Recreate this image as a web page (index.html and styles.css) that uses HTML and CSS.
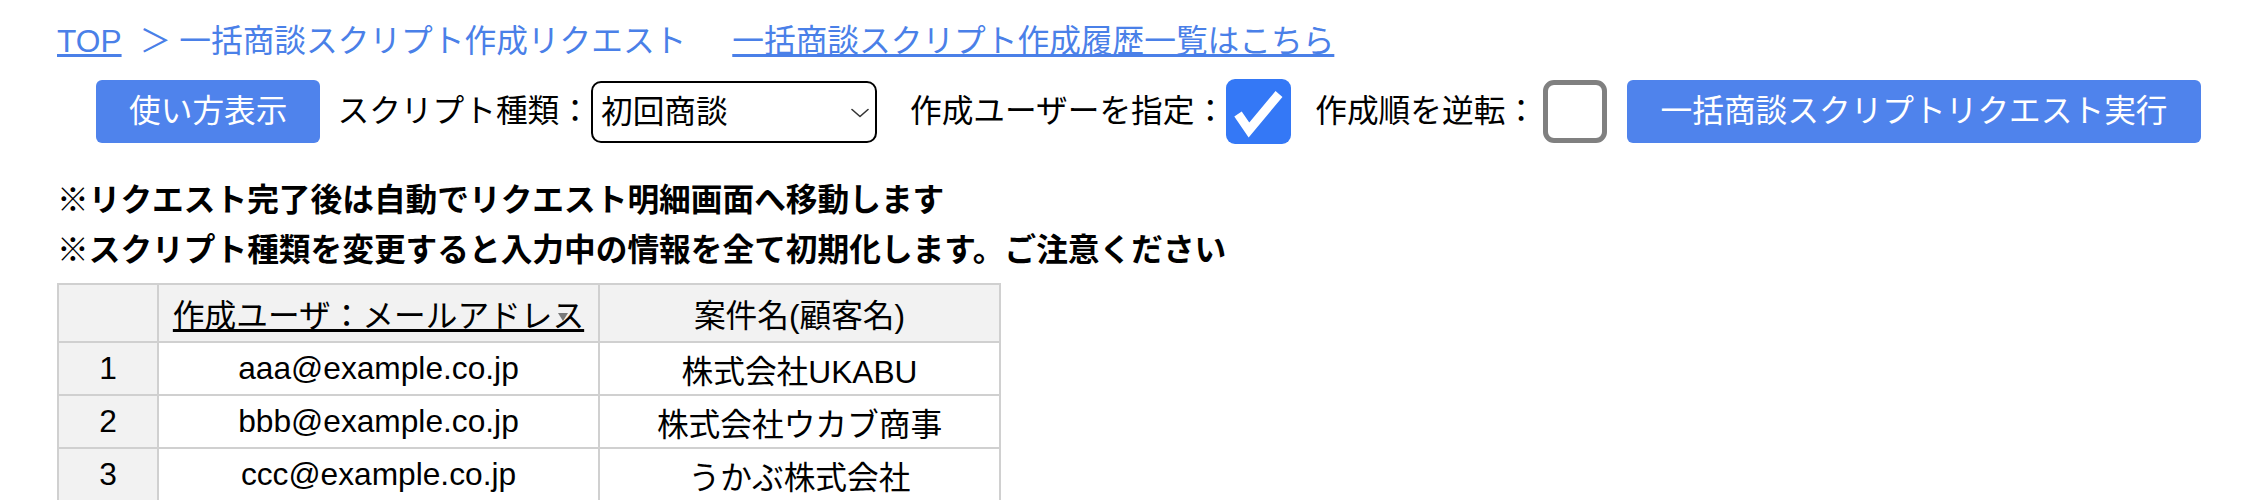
FILE: index.html
```html
<!DOCTYPE html>
<html lang="ja">
<head>
<meta charset="utf-8">
<title>一括商談スクリプト作成リクエスト</title>
<link rel="stylesheet" href="styles.css">
</head>
<body>
<div class="page">
  <nav class="breadcrumb">
    <a class="crumb-link" href="#">TOP</a><span class="crumb-sep">＞</span><span class="crumb-current">一括商談スクリプト作成リクエスト</span><a class="history-link" href="#">一括商談スクリプト作成履歴一覧はこちら</a>
  </nav>

  <div class="toolbar">
    <button class="btn btn-help" type="button">使い方表示</button>
    <span class="field-label label-type">スクリプト種類：</span>
    <div class="select-wrap">
      <select class="select">
        <option>初回商談</option>
      </select>
      <svg class="select-arrow" width="18" height="10" viewBox="0 0 18 10"><polyline points="1,1.5 9,8.5 17,1.5" fill="none" stroke="#333" stroke-width="1.6" stroke-linecap="round" stroke-linejoin="round"/></svg>
    </div>
    <span class="field-label label-user">作成ユーザーを指定：</span>
    <span class="checkbox checkbox-on">
      <svg width="65" height="65" viewBox="0 0 65 65"><polyline points="12,35 23,51 53,15" fill="none" stroke="#fff" stroke-width="9" stroke-linejoin="miter"/></svg>
    </span>
    <span class="field-label label-order">作成順を逆転：</span>
    <span class="checkbox checkbox-off"></span>
    <button class="btn btn-run" type="button">一括商談スクリプトリクエスト実行</button>
  </div>

  <div class="notes">
    <p>※リクエスト完了後は自動でリクエスト明細画面へ移動します</p>
    <p>※スクリプト種類を変更すると入力中の情報を全て初期化します。ご注意ください</p>
  </div>

  <table class="data-table">
    <thead>
      <tr>
        <th class="col-index"></th>
        <th class="col-user"><span class="sort-label">作成ユーザ：メールアドレス</span></th>
        <th class="col-name">案件名(顧客名)</th>
      </tr>
    </thead>
    <tbody>
      <tr>
        <td class="col-index">1</td>
        <td>aaa@example.co.jp</td>
        <td>株式会社UKABU</td>
      </tr>
      <tr>
        <td class="col-index">2</td>
        <td>bbb@example.co.jp</td>
        <td>株式会社ウカブ商事</td>
      </tr>
      <tr>
        <td class="col-index">3</td>
        <td>ccc@example.co.jp</td>
        <td>うかぶ株式会社</td>
      </tr>
    </tbody>
  </table>
</div>
</body>
</html>
```
FILE: styles.css
```css
* {
  box-sizing: border-box;
}

html,
body {
  margin: 0;
  background: #ffffff;
}

body {
  font-family: "Liberation Sans", "Noto Sans CJK JP", sans-serif;
  font-size: 31.7px;
  color: #000000;
}

.page {
  padding: 18px 0 0 57px;
}

/* Breadcrumb */
.breadcrumb {
  height: 46px;
  line-height: 46px;
  white-space: nowrap;
  color: #4a80e8;
}

.crumb-link,
.history-link {
  color: #4a80e8;
  text-decoration: underline;
}

.crumb-sep {
  margin: 0 8px 0 18px;
}

.history-link {
  margin-left: 46px;
}

/* Toolbar */
.toolbar {
  display: flex;
  align-items: center;
  height: 63px;
  margin: 16px 0 0 39px;
  white-space: nowrap;
}

.btn {
  height: 63px;
  padding: 0 33px;
  border: none;
  border-radius: 6px;
  background: #4f83ec;
  color: #ffffff;
  font-family: inherit;
  font-size: 31.7px;
  line-height: 63px;
  cursor: pointer;
}

.field-label {
  line-height: 63px;
}

.label-type {
  margin-left: 17px;
}

.label-user {
  margin-left: 33px;
}

.label-order {
  margin-left: 24px;
}

.select-wrap {
  position: relative;
  width: 286px;
  height: 62px;
}

.select {
  appearance: none;
  -webkit-appearance: none;
  width: 100%;
  height: 100%;
  padding: 0 0 0 8px;
  border: 2px solid #000000;
  border-radius: 10px;
  background: #ffffff;
  color: #000000;
  font-family: inherit;
  font-size: 31.7px;
}

.select-arrow {
  position: absolute;
  right: 8px;
  top: 27px;
}

.checkbox {
  display: block;
  width: 65px;
  height: 65px;
  border-radius: 9px;
}

.checkbox svg {
  display: block;
}

.checkbox-on {
  background: #3478f6;
}

.checkbox-off {
  width: 64px;
  height: 63px;
  margin-left: 6px;
  border: 5px solid #808080;
  border-radius: 11px;
  background: #ffffff;
}

.btn-run {
  margin-left: 20px;
  width: 574px;
}

/* Notes */
.notes {
  margin-top: 32px;
  font-weight: bold;
  line-height: 50px;
}

.notes p {
  margin: 0;
}

/* Table */
.data-table {
  margin-top: 8px;
  border-collapse: collapse;
  width: 942px;
  table-layout: fixed;
}

.data-table th,
.data-table td {
  border: 2px solid #d0d0d0;
  text-align: center;
  padding: 0;
  font-weight: normal;
}

.data-table th {
  height: 58px;
  background: #f2f2f2;
}

.data-table td {
  height: 53px;
}

.data-table .col-index {
  width: 100px;
  background: #f2f2f2;
}

.data-table th.col-user {
  width: 441px;
}

.data-table th.col-name {
  width: 401px;
}

.sort-label {
  position: relative;
  text-decoration: underline;
}

.sort-label::after {
  content: "";
  position: absolute;
  right: 16px;
  top: 15px;
  border-left: 5px solid transparent;
  border-right: 5px solid transparent;
  border-top: 8px solid #7a7a7a;
}
```
